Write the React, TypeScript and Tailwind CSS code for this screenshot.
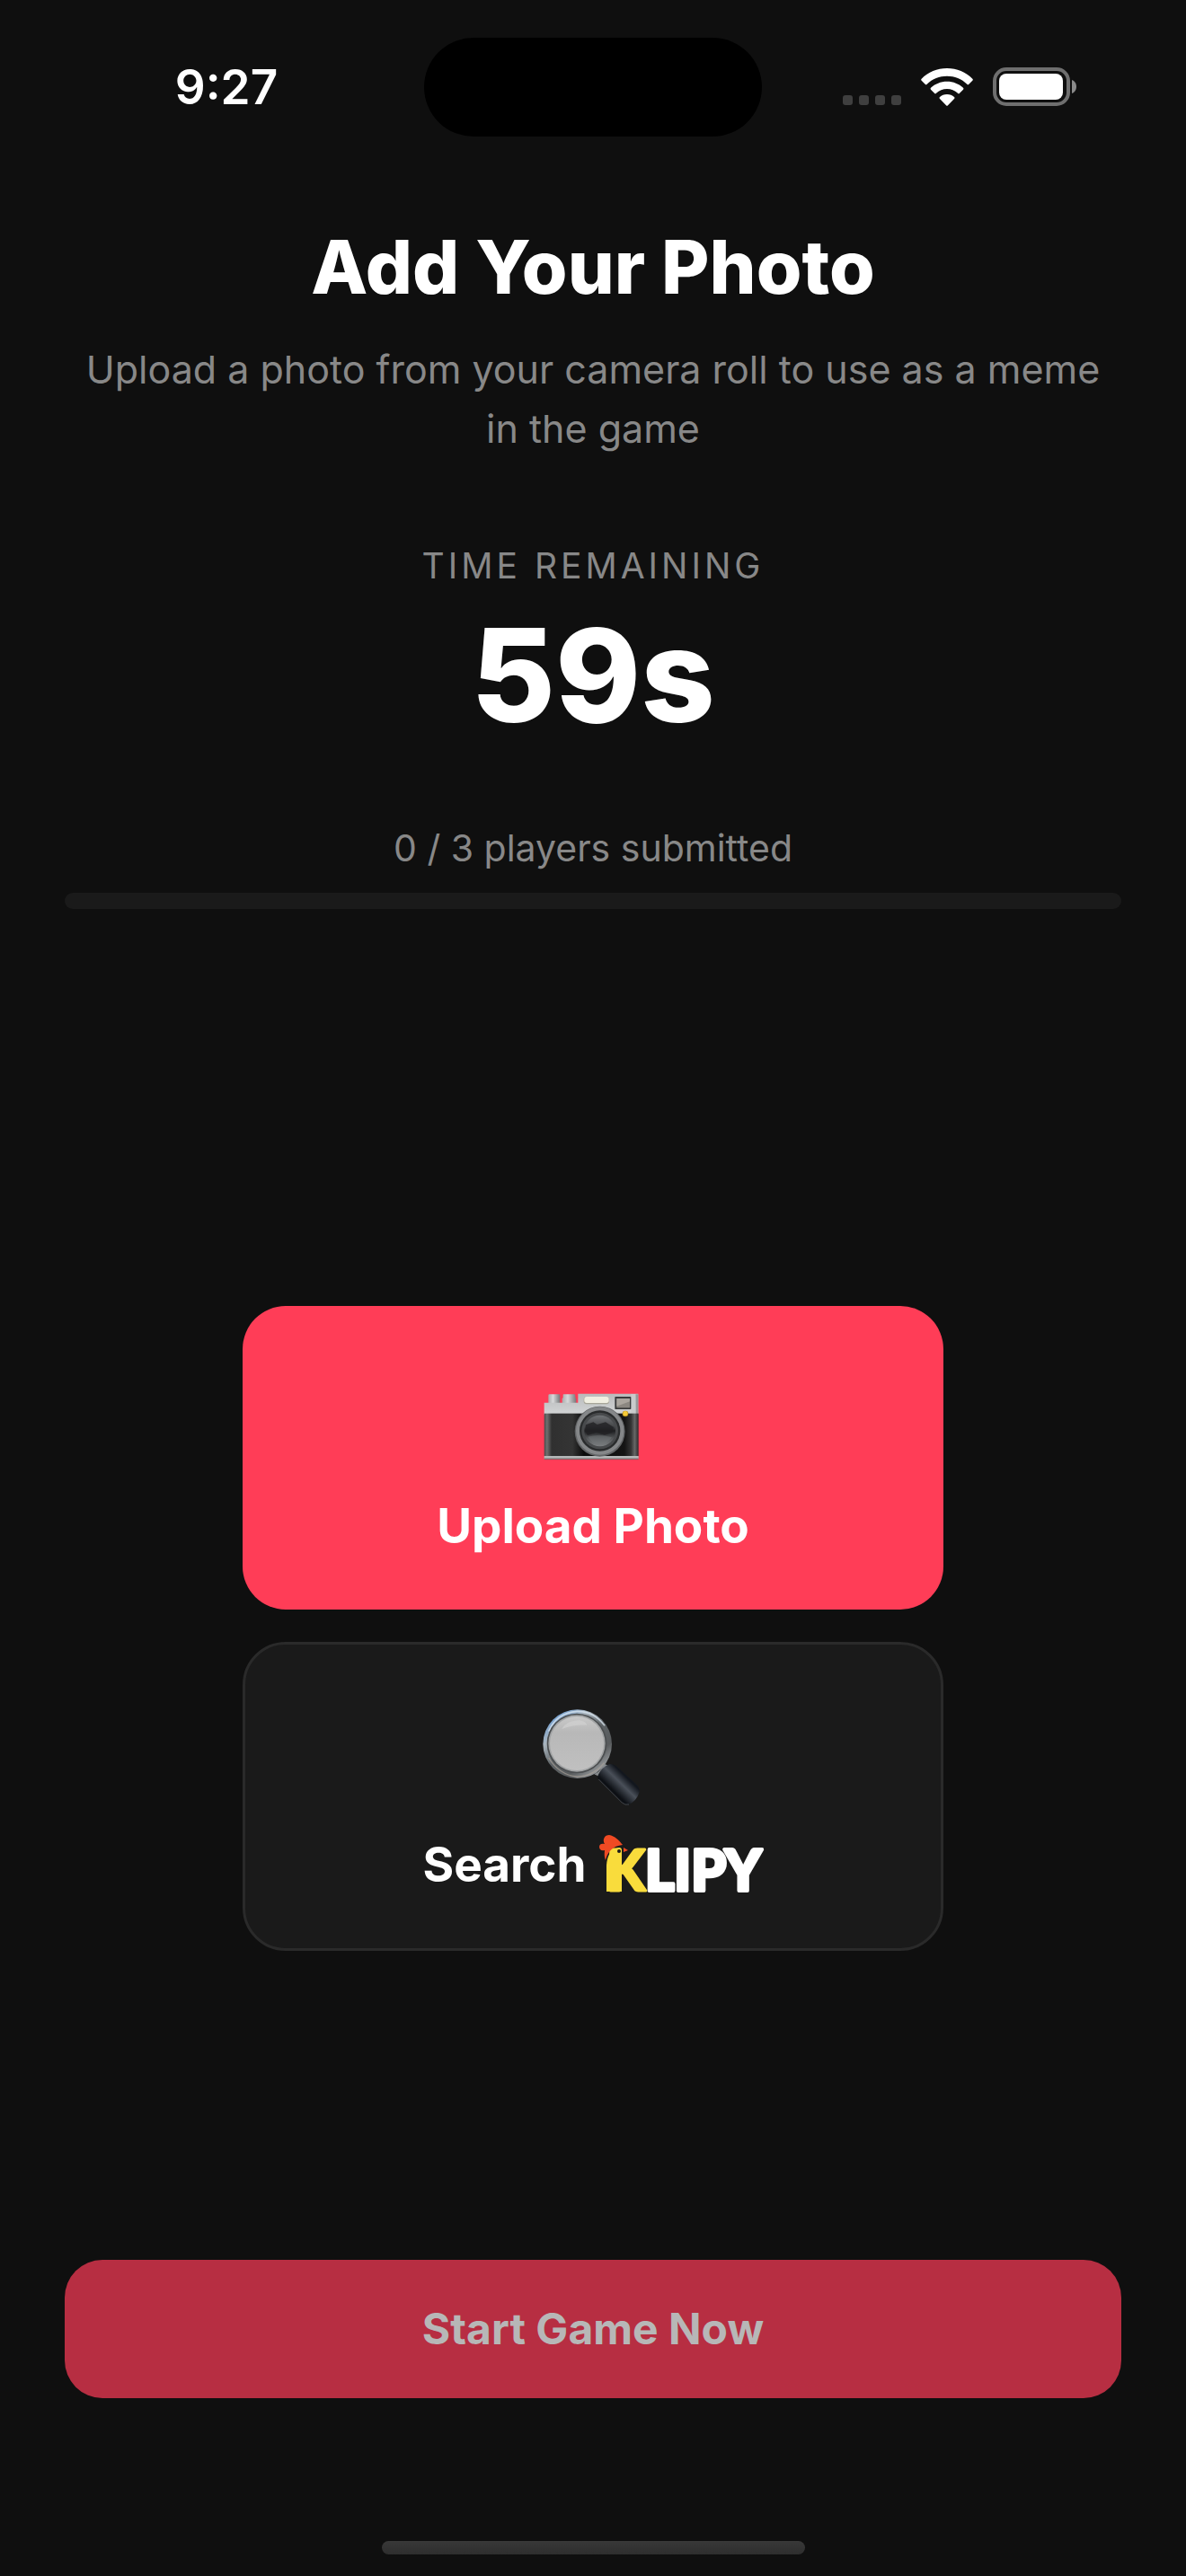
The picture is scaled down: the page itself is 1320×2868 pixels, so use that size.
import { useState } from 'react';

const TOTAL_PLAYERS = 3;

const SignalDots = () => (
  <div className="flex gap-[7px] pt-[28px]">
    {[0, 1, 2, 3].map((dot) => (
      <span key={dot} className="h-[11px] w-[11px] rounded-[3px] bg-[#3f3f3f]" />
    ))}
  </div>
);

const WifiIcon = () => (
  <svg width="58" height="42" viewBox="0 0 174 126" fill="#fff" aria-hidden="true">
    <path d="M87 0C54 0 24 13 2 35Q-1 38 2 41L14 53Q17 56 20 53C38 35 62 26 87 26C112 26 136 35 154 53Q157 56 160 53L172 41Q175 38 172 35C150 13 120 0 87 0Z" />
    <path d="M87 44C66 44 47 52 33 65Q30 68 33 71L45 83Q48 86 51 83C61 74 73 69 87 69C101 69 113 74 123 83Q126 86 129 83L141 71Q144 68 141 65C127 52 108 44 87 44Z" />
    <path d="M87 87C77 87 69 90 63 96Q60 99 63 102L84 124Q87 127 90 124L111 102Q114 99 111 96C105 90 97 87 87 87Z" />
  </svg>
);

const BatteryIcon = () => (
  <svg width="94" height="44" viewBox="0 0 94 44" aria-hidden="true">
    <rect x="2" y="2" width="82" height="39" rx="13" fill="none" stroke="#6f6f6f" strokeWidth="4" />
    <rect x="7" y="7" width="71" height="29" rx="8" fill="#fff" />
    <path d="M88 14C91 15 93 18 93 21.500C93 25 91 28 88 29Z" fill="#8a8a8a" />
  </svg>
);

const CameraIcon = () => (
  <svg width="108" height="108" viewBox="48 18 324 324" aria-hidden="true" className="overflow-visible">
    <defs>
      <linearGradient id="cam-metal" x1="0" y1="0" x2="0" y2="1">
        <stop offset="0" stopColor="#b9bbbc" />
        <stop offset="1" stopColor="#d3d5d6" />
      </linearGradient>
      <linearGradient id="cam-knob" x1="0" y1="0" x2="1" y2="0">
        <stop offset="0" stopColor="#a9abac" />
        <stop offset="0.4" stopColor="#d8d9da" />
        <stop offset="1" stopColor="#77797a" />
      </linearGradient>
      <linearGradient id="cam-body" x1="0" y1="0" x2="1" y2="0">
        <stop offset="0" stopColor="#4a4a4a" />
        <stop offset="0.03" stopColor="#707070" />
        <stop offset="0.08" stopColor="#303030" />
        <stop offset="0.3" stopColor="#343434" />
        <stop offset="0.42" stopColor="#0b0b0b" />
        <stop offset="0.85" stopColor="#141414" />
        <stop offset="0.92" stopColor="#333" />
        <stop offset="0.96" stopColor="#666" />
        <stop offset="1" stopColor="#2b2b2b" />
      </linearGradient>
      <linearGradient id="cam-glass" x1="0" y1="0" x2="0" y2="1">
        <stop offset="0" stopColor="#707376" />
        <stop offset="0.35" stopColor="#46484a" />
        <stop offset="0.5" stopColor="#1d1e20" />
        <stop offset="0.75" stopColor="#56595b" />
        <stop offset="1" stopColor="#7e8183" />
      </linearGradient>
    </defs>
    <rect x="61" y="97" width="39" height="32" rx="4" fill="url(#cam-knob)" />
    <path d="M112 97H147Q151 97 151 101V108L154 112V128H107V112L110 108V99Q110 97 112 97Z" fill="url(#cam-knob)" />
    <path d="M47 125H160V95H361V166H47Z" fill="url(#cam-metal)" />
    <rect x="337" y="96" width="15" height="66" fill="#c9cbcc" />
    <rect x="353" y="97" width="8" height="66" fill="#97999a" />
    <rect x="47" y="161" width="315" height="143" fill="url(#cam-body)" />
    <rect x="47" y="303" width="315" height="10" fill="#b4b6b7" />
    <rect x="47" y="311" width="315" height="4" fill="#7d6668" />
    <rect x="179" y="105" width="85" height="25" rx="9" fill="#a8a699" />
    <rect x="181" y="105" width="82" height="21" rx="8" fill="#f0efe2" />
    <rect x="283" y="105" width="54" height="42" rx="2" fill="#3a3b3c" />
    <rect x="289" y="111" width="44" height="31" fill="#8b8781" />
    <path d="M289 111H333V121L289 137Z" fill="#aaa59e" />
    <circle cx="233" cy="221" r="84" fill="#626466" />
    <circle cx="233" cy="219" r="80" fill="#858789" />
    <circle cx="233" cy="219" r="68" fill="#292b2c" />
    <circle cx="233" cy="219" r="61" fill="#484a4c" />
    <circle cx="233" cy="219" r="52" fill="url(#cam-glass)" />
    <path d="M186 199L211 190L224 198L252 190L279 207L274 225L249 233L221 225L192 234L183 220Z" fill="#202123" opacity="0.8" />
    <path d="M193 239Q230 228 273 241Q255 266 233 268Q210 267 193 239Z" fill="#767a7d" opacity="0.45" />
    <circle cx="318" cy="162" r="10" fill="#a8851c" />
    <circle cx="318" cy="161" r="8" fill="#f6cb38" />
  </svg>
);

const MagnifierIcon = () => (
  <svg width="108" height="108" viewBox="48 66 324 324" aria-hidden="true" className="overflow-visible">
    <defs>
      <linearGradient id="mag-ring" x1="0.15" y1="0.05" x2="0.85" y2="0.95">
        <stop offset="0" stopColor="#6d9fd6" />
        <stop offset="0.25" stopColor="#a9b4bd" />
        <stop offset="0.5" stopColor="#5d6265" />
        <stop offset="0.75" stopColor="#585b5d" />
        <stop offset="1" stopColor="#a9adb0" />
      </linearGradient>
      <linearGradient id="mag-lens" x1="0" y1="0" x2="0" y2="1">
        <stop offset="0" stopColor="#c9c9c9" />
        <stop offset="0.3" stopColor="#b8b8b8" />
        <stop offset="1" stopColor="#c0c0c0" />
      </linearGradient>
      <linearGradient id="mag-handle" x1="0" y1="1" x2="1" y2="0">
        <stop offset="0.15" stopColor="#07090d" />
        <stop offset="0.36" stopColor="#0d1015" />
        <stop offset="0.54" stopColor="#4a5059" />
        <stop offset="0.68" stopColor="#12161d" />
        <stop offset="1" stopColor="#1b2230" />
      </linearGradient>
    </defs>
    <path d="M214 283Q240 270 247 248L270 257L237 294Z" fill="#85898c" />
    <path d="M227 286Q238 260 265 249Q277 248 287 255L355 317Q369 331 364 345Q356 371 330 384Q317 387 307 378L229 300Q223 294 227 286Z" fill="url(#mag-handle)" />
    <path d="M229 300L307 378Q317 387 330 384" fill="none" stroke="#5c6066" strokeWidth="2" />
    <circle cx="158" cy="182" r="115" fill="url(#mag-ring)" />
    <path d="M62 140Q88 78 157 73Q213 72 249 121" fill="none" stroke="#dbe7f2" strokeWidth="5" opacity="0.75" />
    <path d="M62 228Q96 285 157 291Q211 290 247 245" fill="none" stroke="#a89f97" strokeWidth="4" opacity="0.7" />
    <circle cx="156" cy="180" r="100" fill="#4b4e50" />
    <circle cx="156" cy="180" r="95" fill="#a2a4a5" />
    <circle cx="156" cy="180" r="90" fill="url(#mag-lens)" />
    <path d="M105 132Q123 104 164 103Q185 106 190 119Q149 117 105 132Z" fill="#d4d4d4" opacity="0.6" />
  </svg>
);

// wordmark with the rooster head sitting on top of the K
const KlipyLogo = () => (
  <svg width="183" height="66" viewBox="0 0 183 66" role="img" aria-label="KLIPY" className="overflow-visible">
    <g fontFamily="Lato, sans-serif" fontWeight="900" fontSize="62" strokeLinejoin="round">
      <text x="8" y="62" fill="#f9dc3c" stroke="#f9dc3c" strokeWidth="3">K</text>
      <text x="51" y="62" fill="#fff" stroke="#fff" strokeWidth="4">LIPY</text>
    </g>
    <path d="M8 63V34Q9 16 22 14Q25 14 25 17V63Z" fill="#f9dc3c" />
    <path d="M7 28C5 23 6 19 6 17C2 18 0 16 0 13C0 10 3 9 6 10C3 5 6 0 11 0C17 1 22 6 26 11C15 12 9 19 7 28Z" fill="#f04a23" />
    <circle cx="22" cy="18" r="2" fill="#1a1a1a" />
    <path d="M27 14L32 17L27 19Z" fill="#f04a23" />
  </svg>
);

const StatusBar = () => (
  <header className="grid grid-cols-[1fr_376px_1fr] items-center pt-[42px]">
    <time className="pl-[32px] text-center text-[53px] leading-[66px] font-semibold">9:27</time>
    <div className="h-[110px] rounded-full bg-black" />
    <div className="flex items-center justify-end gap-[22px] pr-[121px]">
      <SignalDots />
      <WifiIcon />
      <BatteryIcon />
    </div>
  </header>
);

const App = () => {
  const [submitted] = useState(0);
  const [secondsLeft] = useState(59);

  return (
    <div className="flex min-h-screen flex-col bg-[#0f0f0f] font-['Inter',sans-serif] text-white">
      <StatusBar />

      <main className="flex flex-1 flex-col px-[72px] pt-[96px]">
        <section className="px-[12px] text-center">
          <h1 className="text-[82px] leading-[100px] font-extrabold">Add Your Photo</h1>
          <p className="mt-[30px] text-[43px] leading-[66px] text-[#888]">
            Upload a photo from your camera roll to use as a meme in the game
          </p>
        </section>

        <section className="mt-[96px] text-center">
          <p className="text-[39px] leading-[48px] tracking-[4px] text-[#888] uppercase">Time Remaining</p>
          <p className="mt-[12px] text-[144px] leading-[172px] font-extrabold">{secondsLeft}s</p>
        </section>

        <section className="mt-[80px]">
          <p id="progress-label" className="text-center text-[41px] leading-[52px] text-[#888]">
            {submitted} / {TOTAL_PLAYERS} players submitted
          </p>
          <div
            role="progressbar"
            aria-labelledby="progress-label"
            aria-valuenow={submitted}
            aria-valuemax={TOTAL_PLAYERS}
            className="mt-[24px] h-[18px] overflow-hidden rounded-full bg-[#1a1a1a]"
          >
            <div className="h-full bg-[#ff3d57]" style={{ width: `${(submitted / TOTAL_PLAYERS) * 100}%` }} />
          </div>
        </section>

        <section className="mt-[98px] flex flex-1 flex-col items-center justify-center gap-[36px]">
          <button className="flex w-full max-w-[780px] flex-col items-center rounded-[48px] bg-[#ff3d57] pt-[72px] pb-[60px]">
            <CameraIcon />
            <span className="mt-[32px] text-[53px] leading-[66px] font-bold">Upload Photo</span>
          </button>
          <button className="flex w-full max-w-[780px] flex-col items-center rounded-[48px] border-[3px] border-[#2a2a2a] bg-[#1a1a1a] pt-[72px] pb-[60px]">
            <MagnifierIcon />
            <span className="mt-[32px] flex items-center gap-[14px] text-[53px] leading-[66px] font-bold">
              Search <KlipyLogo />
            </span>
          </button>
        </section>

        <button disabled className="rounded-[42px] bg-[#b72e42] py-[48px] text-[48px] leading-[58px] font-bold text-[#b7b7b7]">
          Start Game Now
        </button>
      </main>

      <footer className="flex justify-center pt-[159px] pb-[24px]">
        <div className="h-[15px] w-[471px] rounded-full bg-linear-to-b from-[#383838] to-[#2e2e2e]" />
      </footer>
    </div>
  );
};

export default App;
